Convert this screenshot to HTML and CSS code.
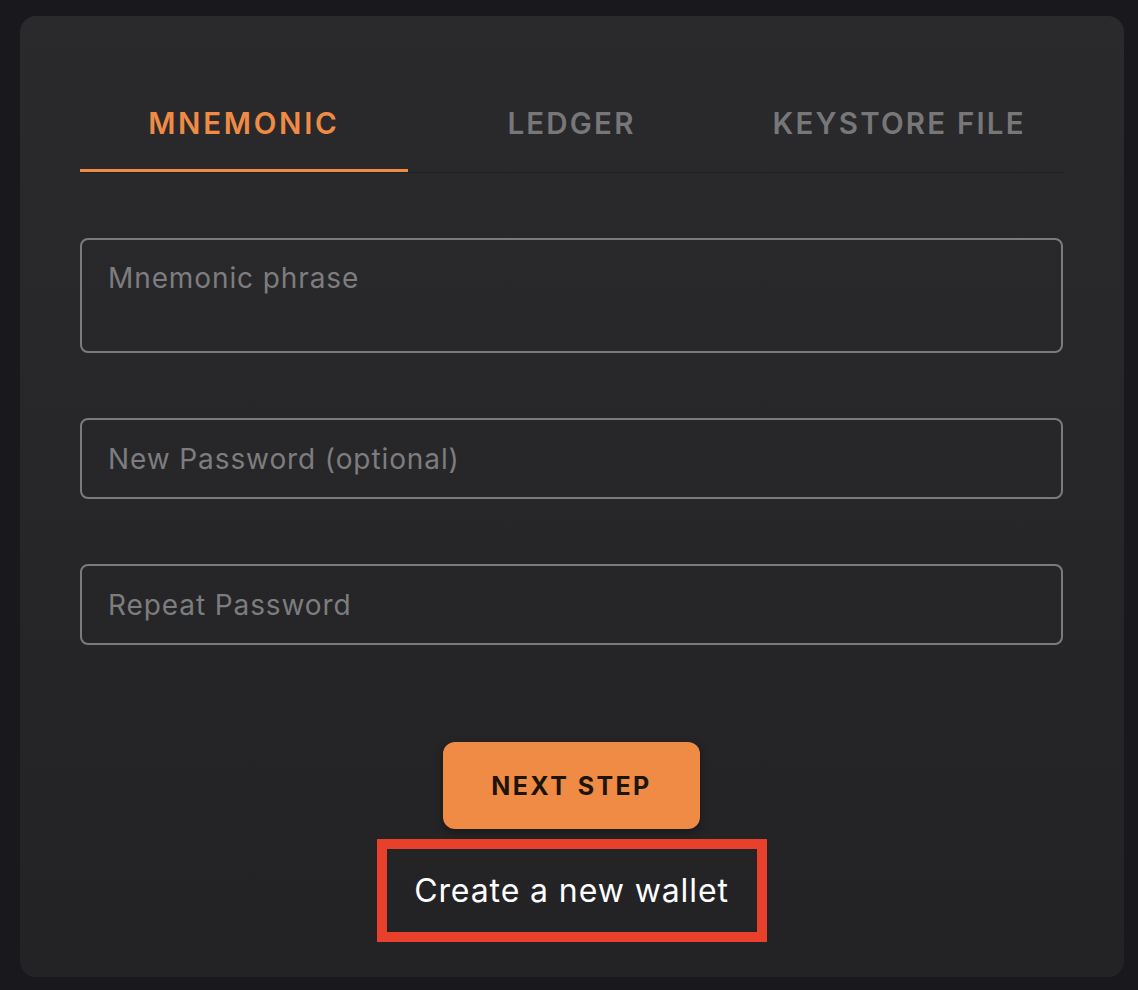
FILE: index.html
```html
<!DOCTYPE html>
<html lang="en">
<head>
  <meta charset="UTF-8">
  <meta name="viewport" content="width=device-width, initial-scale=1.0">
  <title>Import Wallet</title>
  <link rel="stylesheet" href="styles.css">
</head>
<body>
  <div class="wallet-card">
    <div class="tabs">
      <div class="tab active">MNEMONIC</div>
      <div class="tab">LEDGER</div>
      <div class="tab">KEYSTORE FILE</div>
    </div>
    <form class="wallet-form">
      <textarea class="field field-area" placeholder="Mnemonic phrase"></textarea>
      <input class="field" type="password" placeholder="New Password (optional)">
      <input class="field" type="password" placeholder="Repeat Password">
      <div class="actions">
        <button type="button" class="next-btn">NEXT STEP</button>
        <a href="#" class="create-link">Create a new wallet</a>
      </div>
    </form>
  </div>
</body>
</html>
```

FILE: styles.css
```css
body {
  font-family: Inter, "Open Sans", sans-serif;
  margin: 0;
  padding: 16px 14px 13px 20px;
  background-color: #19181d;
}
.wallet-card {
  height: 961px;
  box-sizing: border-box;
  padding: 58px 61px 0 60px;
  border-radius: 16px;
  background: linear-gradient(#2a2a2c, #232326);
}
.tabs {
  display: flex;
  border-bottom: 1px solid #202022;
}
.tab {
  flex: 1;
  text-align: center;
  padding: 29px 0 26px;
  line-height: 40px;
  font-size: 29.5px;
  font-weight: 600;
  letter-spacing: 2.2px;
  color: #777779;
  border-bottom: 3px solid transparent;
}
.tab.active {
  color: #f08b45;
  border-bottom-color: #f08b45;
  letter-spacing: 2.7px;
}
.wallet-form {
  display: flex;
  flex-direction: column;
  padding-top: 65px;
}
.field {
  display: block;
  box-sizing: border-box;
  width: 100%;
  height: 81px;
  margin-bottom: 65px;
  padding: 0 26px;
  background: transparent;
  border: 2px solid #7b7b7d;
  border-radius: 8px;
  font-family: inherit;
  font-size: 28px;
  letter-spacing: 0.9px;
  color: #ddd;
  outline: none;
}
.field::placeholder {
  color: #7d7d7f;
}
.field-area {
  height: 115px;
  padding-top: 20px;
  line-height: 36px;
  resize: none;
}
.actions {
  display: flex;
  flex-direction: column;
  align-items: center;
  margin-top: 32px;
}
.next-btn {
  width: 257px;
  height: 87px;
  background: #f08b45;
  color: #1d140c;
  border: none;
  border-radius: 12px;
  font-family: inherit;
  font-size: 25px;
  font-weight: 700;
  letter-spacing: 2.4px;
  padding-top: 2px;
  box-shadow: 0 3px 8px rgba(0, 0, 0, 0.35);
  cursor: pointer;
}
.create-link {
  margin-top: 10px;
  width: 370px;
  height: 83px;
  display: flex;
  align-items: center;
  justify-content: center;
  border: 10px solid #e8402a;
  color: #fff;
  font-size: 32px;
  letter-spacing: 0.9px;
  text-decoration: none;
}
```
